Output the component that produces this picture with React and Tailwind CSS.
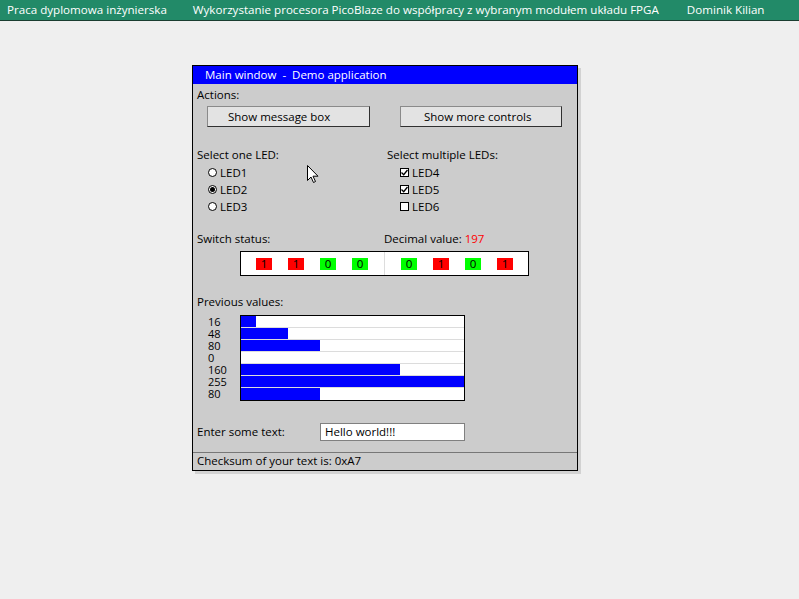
import React from "react";

const font = { fontFamily: '"Open Sans", "DejaVu Sans", sans-serif' };

function Radio({ checked, label }) {
  return (
    <div className="flex h-[17px] items-center pl-[15px]">
      <span className="flex h-[9px] w-[9px] items-center justify-center rounded-full border border-black bg-white">
        {checked && <span className="h-[5px] w-[5px] rounded-full bg-black" />}
      </span>
      <span className="ml-[3px]">{label}</span>
    </div>
  );
}

function Check({ checked, label }) {
  return (
    <div className="flex h-[17px] items-center pl-[13px]">
      <span className="flex h-[9px] w-[9px] items-center justify-center border border-black bg-white">
        {checked && (
          <svg width="7" height="7" viewBox="0 0 7 7">
            <path d="M0.5 3.5 L2.7 5.7 L6.5 1" stroke="black" strokeWidth="1.3" fill="none" />
          </svg>
        )}
      </span>
      <span className="ml-[3px]">{label}</span>
    </div>
  );
}

function Bit({ v }) {
  return (
    <div className="flex w-[32px] justify-center">
      <span
        className={
          "flex h-[12px] w-[16px] items-center justify-center text-[11.5px] leading-none " +
          (v === 1 ? "bg-[#ff0000]" : "bg-[#00ff00]")
        }
      >
        {v}
      </span>
    </div>
  );
}

const values = [16, 48, 80, 0, 160, 255, 80];

export default function App() {
  return (
    <div className="relative min-h-[599px] w-full bg-[#efefef] text-[11.5px] text-black" style={font}>
      <div className="flex h-[21px] items-center border-b border-[#1a3d30] bg-[#228a68] pl-[7px] text-[11.6px] text-white">
        <span>Praca dyplomowa inżynierska</span>
        <span className="ml-[26px]">Wykorzystanie procesora PicoBlaze do współpracy z wybranym modułem układu FPGA</span>
        <span className="ml-[28px]">Dominik Kilian</span>
      </div>

      <div className="ml-[192px] mt-[44px] w-[386px] border border-black bg-[#cccccc] leading-[16px] shadow-[3px_3px_0_#d2d2d2]">
        <div className="flex h-[18px] items-center bg-[#0000ff] pl-[12px] text-white">
          Main window&nbsp; - &nbsp;Demo application
        </div>
        <div className="pl-[4px] pt-[3px]">Actions:</div>
        <div className="mt-[3px] flex">
          <div className="ml-[14px] flex h-[21px] w-[163px] items-center border border-t-[#8a8a8a] border-l-[#8a8a8a] border-b-[#303030] border-r-[#303030] bg-[#e3e3e3] pl-[20px]">
            Show message box
          </div>
          <div className="ml-[30px] flex h-[21px] w-[162px] items-center border border-t-[#8a8a8a] border-l-[#8a8a8a] border-b-[#303030] border-r-[#303030] bg-[#e3e3e3] pl-[23px]">
            Show more controls
          </div>
        </div>

        <div className="mt-[20px] flex">
          <div className="w-[194px]">
            <div className="pl-[4px]">Select one LED:</div>
            <div className="mt-[1px]">
              <Radio label="LED1" />
              <Radio label="LED2" checked />
              <Radio label="LED3" />
            </div>
          </div>
          <div>
            <div>Select multiple LEDs:</div>
            <div className="mt-[1px]">
              <Check label="LED4" checked />
              <Check label="LED5" checked />
              <Check label="LED6" />
            </div>
          </div>
        </div>

        <div className="mt-[16px] flex">
          <div className="w-[191px] pl-[4px]">Switch status:</div>
          <div>
            Decimal value: <span className="text-[#ff0000]">197</span>
          </div>
        </div>
        <div className="ml-[47px] mt-[4px] flex h-[25px] w-[289px] items-center border border-black bg-white">
          <div className="ml-[7px] flex">
            <Bit v={1} />
            <Bit v={1} />
            <Bit v={0} />
            <Bit v={0} />
          </div>
          <div className="ml-[8px] h-full w-px bg-[#dddddd]" />
          <div className="ml-[8px] flex">
            <Bit v={0} />
            <Bit v={1} />
            <Bit v={0} />
            <Bit v={1} />
          </div>
        </div>

        <div className="mt-[18px] pl-[4px]">Previous values:</div>
        <div className="mt-[5px] flex">
          <div className="w-[47px] pl-[15px] pt-[1px] text-[11px]">
            {values.map((v, i) => (
              <div key={i} className="h-[12px] leading-[12px]">
                {v}
              </div>
            ))}
          </div>
          <div className="w-[225px] border border-black bg-white">
            {values.map((v, i) => (
              <div
                key={i}
                className={"h-[12px] " + (i < values.length - 1 ? "border-b border-[#dcdcdc]" : "")}
              >
                <div className="h-full bg-[#0000ff]" style={{ width: Math.max(0, Math.min(v - 1, 223)) }} />
              </div>
            ))}
          </div>
        </div>

        <div className="mt-[22px] flex h-[18px] items-center">
          <div className="w-[127px] pl-[4px]">Enter some text:</div>
          <div className="flex h-[18px] w-[145px] items-center border border-[#808080] bg-white pl-[4px]">
            Hello world!!!
          </div>
        </div>

        <div className="mt-[11px] border-t border-[#777777] pb-[1px] pl-[4px] pt-0">
          Checksum of your text is: 0xA7
        </div>
      </div>

      <svg
        className="absolute left-[307px] top-[165px]"
        width="12"
        height="19"
        viewBox="0 0 12 19"
      >
        <path
          d="M0.5 0.5 L0.5 15.5 L4 12 L6.5 17.5 L8.5 16.5 L6 11.2 L11 11.2 Z"
          fill="white"
          stroke="black"
          strokeWidth="1"
          strokeLinejoin="miter"
        />
      </svg>
    </div>
  );
}
